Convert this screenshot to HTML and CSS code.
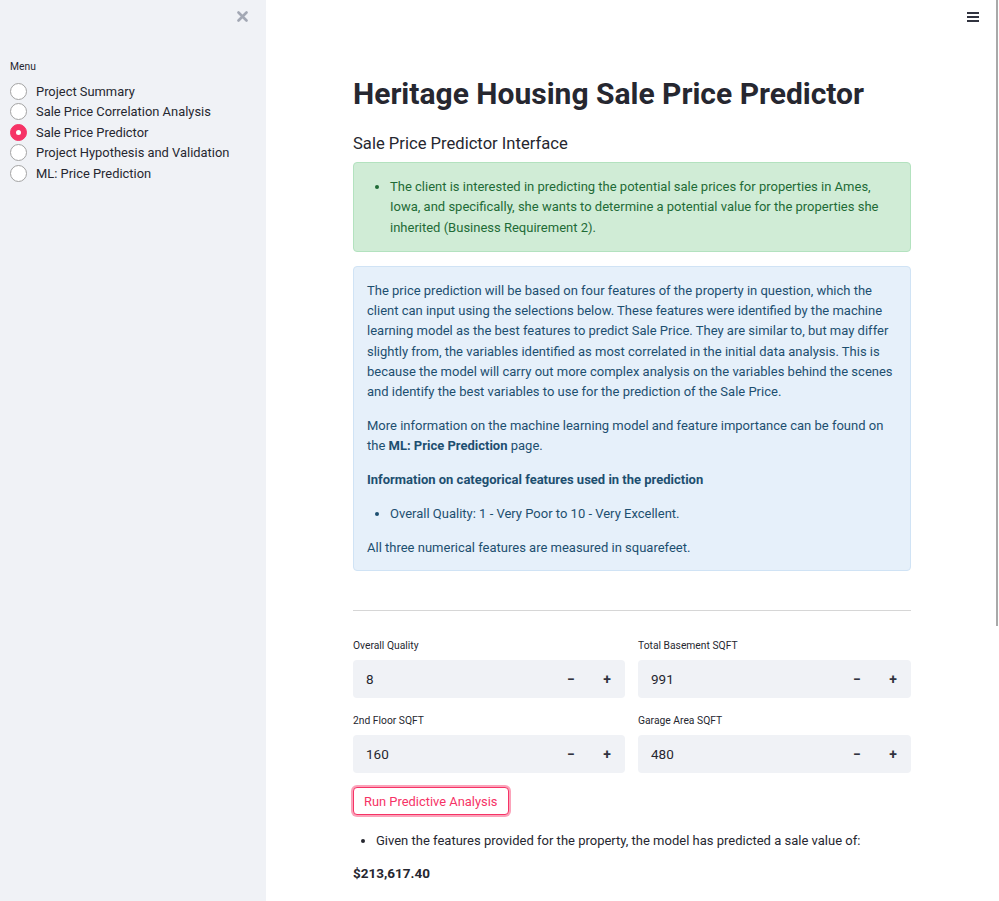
FILE: index.html
```html
<!DOCTYPE html>
<html>
<head>
<meta charset="utf-8">
<link rel="stylesheet" href="styles.css">
</head>
<body>
<div class="app">
  <aside class="sidebar">
    <div class="close-row">
      <svg class="close" width="11" height="11" viewBox="0 0 11 11"><path d="M1.5 1.5 L9.5 9.5 M9.5 1.5 L1.5 9.5" stroke="#a3a8b4" stroke-width="2.6" stroke-linecap="round"/></svg>
    </div>
    <div class="menu-label">Menu</div>
    <ul class="radios">
      <li><span class="radio"></span>Project Summary</li>
      <li><span class="radio"></span>Sale Price Correlation Analysis</li>
      <li><span class="radio on"></span>Sale Price Predictor</li>
      <li><span class="radio"></span>Project Hypothesis and Validation</li>
      <li><span class="radio"></span>ML: Price Prediction</li>
    </ul>
  </aside>
  <main class="main">
    <div class="hamburger"><span></span><span></span><span></span></div>
    <div class="scrollthumb"></div>
    <div class="content">
      <h1 class="title">Heritage Housing Sale Price Predictor</h1>
      <h3 class="subtitle">Sale Price Predictor Interface</h3>
      <div class="alert success">
        <ul class="bullets"><li>The client is interested in predicting the potential sale prices for properties in Ames, Iowa, and specifically, she wants to determine a potential value for the properties she inherited (Business Requirement 2).</li></ul>
      </div>
      <div class="alert info">
        <p>The price prediction will be based on four features of the property in question, which the client can input using the selections below. These features were identified by the machine learning model as the best features to predict Sale Price. They are similar to, but may differ slightly from, the variables identified as most correlated in the initial data analysis. This is because the model will carry out more complex analysis on the variables behind the scenes and identify the best variables to use for the prediction of the Sale Price.</p>
        <p>More information on the machine learning model and feature importance can be found on the <strong>ML: Price Prediction</strong> page.</p>
        <p><strong>Information on categorical features used in the prediction</strong></p>
        <ul class="bullets"><li>Overall Quality: 1 - Very Poor to 10 - Very Excellent.</li></ul>
        <p>All three numerical features are measured in squarefeet.</p>
      </div>
      <hr class="divider">
      <div class="inputs">
        <div class="field">
          <label>Overall Quality</label>
          <div class="numbox"><span class="val">8</span><span class="step">&#8722;</span><span class="step">+</span></div>
        </div>
        <div class="field">
          <label>Total Basement SQFT</label>
          <div class="numbox"><span class="val">991</span><span class="step">&#8722;</span><span class="step">+</span></div>
        </div>
        <div class="field">
          <label>2nd Floor SQFT</label>
          <div class="numbox"><span class="val">160</span><span class="step">&#8722;</span><span class="step">+</span></div>
        </div>
        <div class="field">
          <label>Garage Area SQFT</label>
          <div class="numbox"><span class="val">480</span><span class="step">&#8722;</span><span class="step">+</span></div>
        </div>
      </div>
      <button class="run">Run Predictive Analysis</button>
      <ul class="bullets result"><li>Given the features provided for the property, the model has predicted a sale value of:</li></ul>
      <p class="price">$213,617.40</p>
    </div>
  </main>
</div>
</body>
</html>
```
FILE: styles.css
```css
* { box-sizing: border-box; }
html, body { margin: 0; padding: 0; }
body {
  font-family: Roboto, "Noto Sans", sans-serif;
  color: #262730;
  background: #fff;
  width: 999px;
  height: 901px;
  overflow: hidden;
}
.app { display: flex; height: 901px; }
.sidebar {
  width: 266px;
  flex: none;
  background: #f0f2f6;
  padding: 0 10px;
}
.close-row { display: flex; justify-content: flex-end; padding: 11px 8px 0 0; height: 30px; }
.close { display: block; }
.menu-label { font-size: 10.3px; margin-top: 30px; line-height: 14px; color: #262730; }
.radios { list-style: none; margin: 7px 0 0; padding: 0; }
.radios li {
  display: flex; align-items: center; gap: 9px;
  font-size: 12.9px; height: 20.5px; color: #262730;
}
.radio {
  width: 17px; height: 17px; border-radius: 50%;
  border: 1.5px solid #a3a3a3; background: #fff; flex: none;
  display: flex; align-items: center; justify-content: center;
}
.radio.on { background: #f63366; border-color: #f63366; }
.radio.on::after { content: ""; width: 5px; height: 5px; border-radius: 50%; background: #fff; }

.main { flex: 1; position: relative; }
.hamburger { position: absolute; top: 12px; left: 701px; display: flex; flex-direction: column; gap: 2px; }
.hamburger span { display: block; width: 12px; height: 2px; background: #31333f; }
.scrollthumb { position: absolute; right: 1px; top: 0; width: 2px; height: 626px; background: #a9a9a9; }
.content { width: 558px; margin-left: 87px; padding-top: 74px; }
.title {
  font-size: 30px; font-weight: 700; margin: 0; line-height: 40px; color: #262730;
}
.subtitle { font-size: 16.6px; font-weight: 400; margin: 20px 0 0; line-height: 20px; }
.alert { border-radius: 4px; border: 1px solid; font-size: 13px; line-height: 20.3px; }
.alert p { margin: 0 0 13.5px; }
.alert p:last-child { margin-bottom: 0; }
.success {
  margin-top: 8px;
  background: #d0ecd6; border-color: #b3e2bf; color: #1f6b36;
  padding: 14px 13px 13px;
}
.info {
  margin-top: 14px;
  background: #e6f0fa; border-color: #d0e3f5; color: #1d4f70;
  padding: 14px 13px 12px;
}
.bullets { margin: 0; padding: 0 0 0 23px; }
.info .bullets { margin: 0 0 13.5px; }
.divider { border: 0; border-top: 1.5px solid #d6d6d6; margin: 39px 0 0; }
.inputs {
  display: grid; grid-template-columns: 272px 273px; column-gap: 13px; row-gap: 16px;
  margin-top: 28px;
}
.field label { display: block; font-size: 10.3px; line-height: 14px; margin-bottom: 7px; color: #262730; }
.numbox {
  display: flex; align-items: center; height: 38px; background: #f0f2f6; border-radius: 4px;
  font-size: 13.5px; padding-left: 13px;
}
.val { flex: 1; }
.step { width: 36px; text-align: center; font-weight: 700; font-size: 14px; color: #31333f; }
.run {
  margin-top: 14px;
  font-family: inherit; font-size: 12.9px; color: #f63366; background: #fff;
  border: 1px solid #f63366; border-radius: 4px; height: 28px; padding: 0 10px;
  box-shadow: 0 0 0 2px rgba(246, 51, 102, 0.45);
}
.result { margin-top: 16px; font-size: 13px; line-height: 20px; }
.price { font-weight: 700; font-size: 13.5px; margin: 14px 0 0; }
```
